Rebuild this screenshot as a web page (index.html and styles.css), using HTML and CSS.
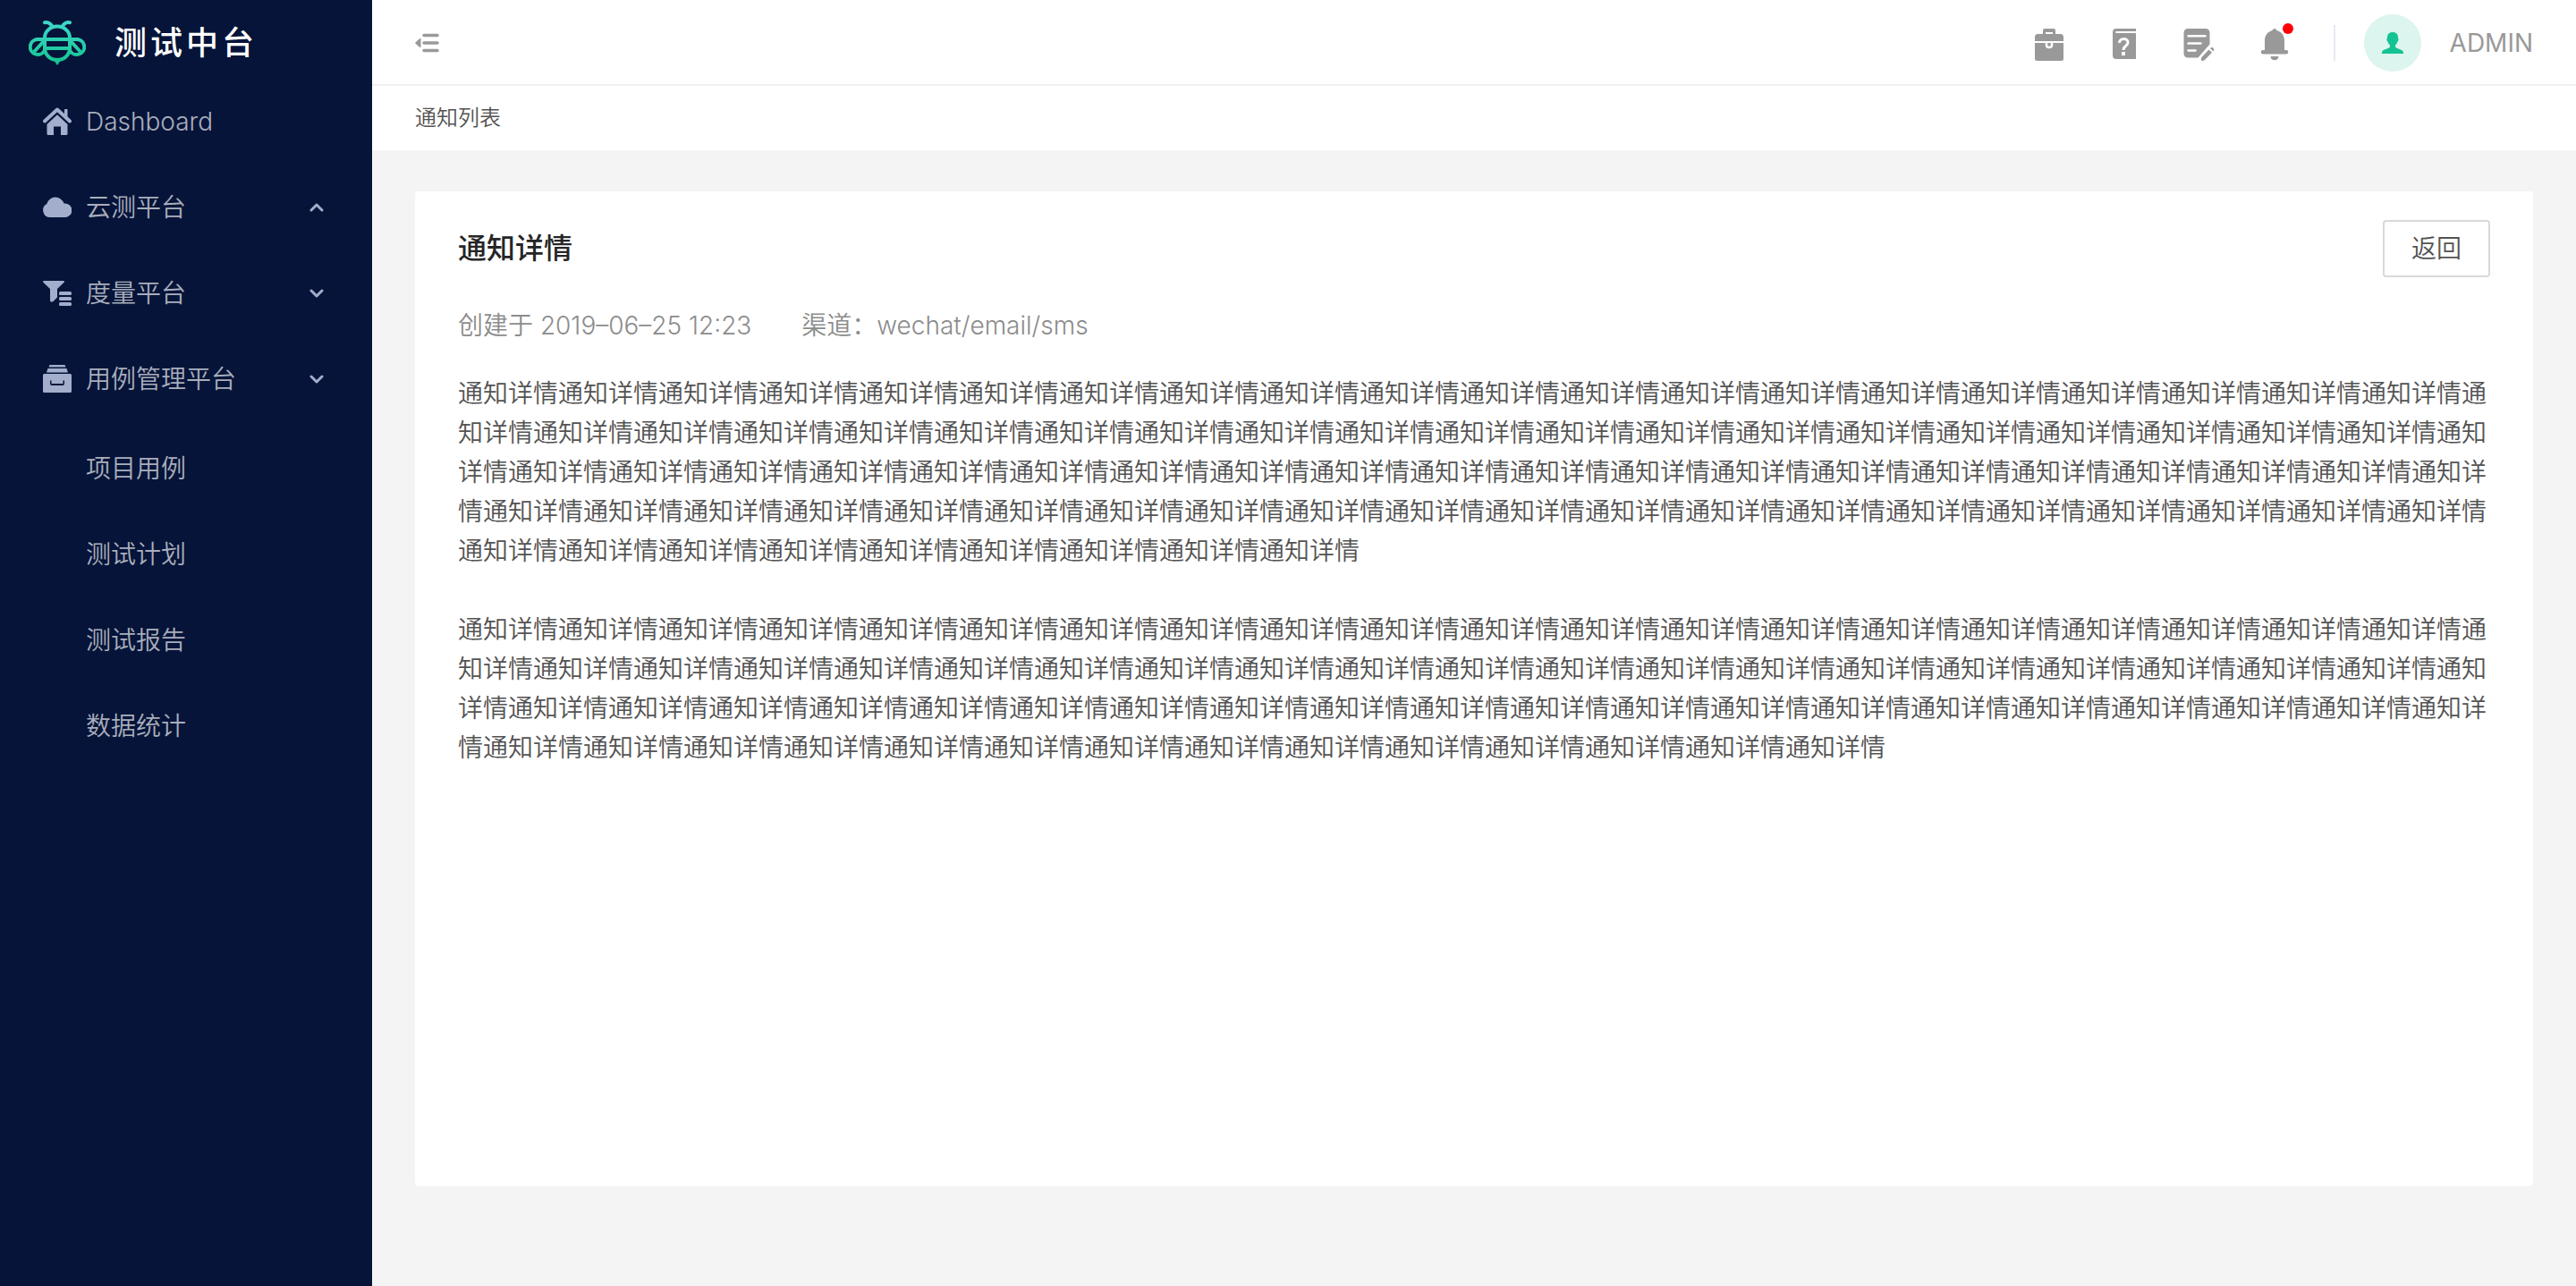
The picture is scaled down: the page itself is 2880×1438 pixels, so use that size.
FILE: index.html
```html
<!DOCTYPE html>
<html lang="zh-CN">
<head>
<meta charset="utf-8">
<meta name="viewport" content="width=device-width, initial-scale=1">
<title>通知详情 - 测试中台</title>
<link rel="stylesheet" href="styles.css">
</head>
<body>
<div class="app">
  <aside class="sidebar">
    <a class="brand" href="#">
      <svg class="brand-logo" viewBox="0 0 64 50" aria-hidden="true">
        <defs>
          <linearGradient id="bee" gradientUnits="userSpaceOnUse" x1="0" y1="0" x2="0" y2="50">
            <stop offset="0" stop-color="#3fd8cb"/>
            <stop offset="1" stop-color="#12c48f"/>
          </linearGradient>
        </defs>
        <g fill="none" stroke="url(#bee)" stroke-width="4">
          <path d="M18 2.200c5-.8 7 2 9 5M46 2.200c-5-.8-7 2-9 5" stroke-linecap="round"/>
          <path d="M18 21v-2a14 12.500 0 0 1 28 0v2M18 21v10a14 13 0 0 0 28 0V21"/>
          <path d="M10 21h44v.01H10zM18 31h28v.01H18z"/>
          <path d="M10 21a8.500 8.500 0 1 0 8 12M54 21a8.500 8.500 0 1 1-8 12"/>
          <path d="M6 35 17 23M58 35 47 23"/>
        </g>
        <path d="M28 44h8l-4 6z" fill="url(#bee)"/>
      </svg>
      <span class="brand-name">测试中台</span>
    </a>
    <nav class="menu">
      <a class="menu-item" href="#">
        <svg class="menu-icon" viewBox="0 0 32 32" aria-hidden="true">
          <path d="M2 15.500 16 2.500l14 13" fill="none" stroke="currentColor" stroke-width="4" stroke-linecap="round" stroke-linejoin="round"/>
          <path d="M24 9V2.800a.8.8 0 0 1 .8-.8h1.900a.8.8 0 0 1 .8.8V12z"/>
          <path d="M16 8.300 27.500 19v10.500a1.500 1.500 0 0 1-1.500 1.500h-6v-9.500h-8V31H6a1.500 1.500 0 0 1-1.500-1.500V19z"/>
        </svg>
        <span>Dashboard</span>
      </a>
      <a class="menu-item" href="#">
        <svg class="menu-icon" viewBox="0 0 32 32" aria-hidden="true">
          <path d="M8 27A8 8 0 0 1 4.300 12 10 10 0 0 1 23.500 11.500 7.800 7.800 0 1 1 24 27z"/>
        </svg>
        <span>云测平台</span>
        <svg class="menu-arrow" viewBox="0 0 16 16" aria-hidden="true"><path d="m2 11 6-6 6 6"/></svg>
      </a>
      <a class="menu-item" href="#">
        <svg class="menu-icon" viewBox="0 0 32 32" aria-hidden="true">
          <path d="M1 2h22c.9 0 1.300 1 .6 1.700L16 11v9.500L11.500 25c-.9 1-3.500.6-3.500-1V11L.4 3.700C-.3 3 .100 2 1 2z"/>
          <rect x="18" y="14" width="14" height="4" rx="1.500"/><rect x="18" y="20" width="14" height="4" rx="1.500"/><rect x="18" y="26" width="14" height="4" rx="1.500"/>
        </svg>
        <span>度量平台</span>
        <svg class="menu-arrow" viewBox="0 0 16 16" aria-hidden="true"><path d="m2 5 6 6 6-6"/></svg>
      </a>
      <a class="menu-item" href="#">
        <svg class="menu-icon" viewBox="0 0 32 32" aria-hidden="true">
          <path d="M6.500 2.500 7.500 0h17l1 2.500zM4 8.500 5.500 4h21L28 8.500z"/>
          <path fill-rule="evenodd" d="M1.500 10h29a1.500 1.500 0 0 1 1.500 1.500v18a1.500 1.500 0 0 1-1.500 1.500h-29A1.500 1.500 0 0 1 0 29.500v-18A1.500 1.500 0 0 1 1.500 10zM8 17.500V21q0 2 2 2h12q2 0 2-2v-3.500h-1.500V21H9.500v-3.500z"/>
        </svg>
        <span>用例管理平台</span>
        <svg class="menu-arrow" viewBox="0 0 16 16" aria-hidden="true"><path d="m2 5 6 6 6-6"/></svg>
      </a>
      <div class="submenu">
        <a class="submenu-item" href="#">项目用例</a>
        <a class="submenu-item" href="#">测试计划</a>
        <a class="submenu-item" href="#">测试报告</a>
        <a class="submenu-item" href="#">数据统计</a>
      </div>
    </nav>
  </aside>

  <div class="page">
    <header class="topbar">
      <button class="icon-button" type="button" aria-label="收起菜单">
        <svg class="fold-icon" viewBox="0 0 28 24" aria-hidden="true">
          <path d="M6.500 7.500v9q0 1-1 .5L.8 13q-1-1 0-2l4.700-4q1-.5 1 .5z"/>
          <path d="M10 3.500h15M10 12h15M10 20.500h15" stroke="currentColor" stroke-width="3.500" stroke-linecap="round"/>
        </svg>
      </button>
      <div class="tools">
        <button class="icon-button" type="button" aria-label="工具箱">
          <svg class="tool-icon" viewBox="0 0 36 36" aria-hidden="true">
            <path fill-rule="evenodd" d="M11 6V2a2 2 0 0 1 2-2h10a2 2 0 0 1 2 2v4h5.500A3.500 3.500 0 0 1 34 9.500V14H2V9.500A3.500 3.500 0 0 1 5.500 6zM14 4v2h8V4z"/>
            <path d="M2 16h32v17.500a2.500 2.500 0 0 1-2.500 2.500h-27A2.500 2.500 0 0 1 2 33.500z"/>
            <path d="M15 16v2.500a3 2.500 0 0 0 6 0V16" fill="none" stroke="#fff" stroke-width="2.500"/>
          </svg>
        </button>
        <button class="icon-button" type="button" aria-label="帮助">
          <svg class="tool-icon" viewBox="0 0 36 36" aria-hidden="true">
            <path fill-rule="evenodd" d="M9 0h22v3H10q-2 0-2 1t2 1h21v29H9a4 4 0 0 1-4-4V4a4 4 0 0 1 4-4zM15 26v4h4v-4z"/>
            <path d="M12.500 16c0-6 9.500-6 9.500-.5 0 4-5 3.500-5 8.500" fill="none" stroke="#fff" stroke-width="3"/>
          </svg>
        </button>
        <button class="icon-button" type="button" aria-label="编辑记录">
          <svg class="tool-icon" viewBox="0 0 36 36" aria-hidden="true">
            <path d="M5 0h20a4.500 4.500 0 0 1 4.500 4.500V17.500L16.500 32.500H5a4.500 4.500 0 0 1-4.500-4.500V4.500A4.500 4.500 0 0 1 5 0z"/>
            <path d="M5.500 8.200h19M5.500 16.500h14M5.500 24.500h8" stroke="#fff" stroke-width="2.500" stroke-linecap="round"/>
            <path d="m28.500 23.500 3.500 3.200-8 8.300q-1 1-4 1-.5-2.500.5-4zM30 22l1-.8q1.500-.6 2.600.6 1.200 1.200.4 2.700l-.8.8z"/>
          </svg>
        </button>
        <button class="icon-button notice" type="button" aria-label="通知">
          <svg class="tool-icon" viewBox="0 0 36 36" aria-hidden="true">
            <path d="M18 0q1.500 0 2.500 2C26 3.500 29 8 29 13v11h2a2.200 2.200 0 0 1 0 4.500H5A2.200 2.200 0 0 1 5 24h2V13C7 8 10 3.500 15.500 2 16.500 0 18 0 18 0z"/>
            <path d="M13.500 31h9q-.5 4.300-4.500 4.300T13.500 31z"/>
          </svg>
          <span class="badge"></span>
        </button>
        <div class="account">
          <span class="divider"></span>
          <a class="user" href="#">
            <span class="avatar">
              <svg class="avatar-icon" viewBox="0 0 24 24" aria-hidden="true">
                <path d="M12 0c4 0 6 2.300 6 6 0 1 .8 1.500.5 3-.2 1-.8 1.200-1 1.600-.4 1.700-1.300 2.700-2.500 3.900v2c1.500 2.500 9 2.500 9 6.200V24H0v-1.300c0-3.700 7.500-3.700 9-6.200v-2c-1.200-1.200-2.100-2.200-2.500-3.900-.2-.4-.8-.6-1-1.600C5.200 7.500 6 7 6 6c0-3.700 2-6 6-6z"/>
              </svg>
            </span>
            <span>ADMIN</span>
          </a>
        </div>
      </div>
    </header>
    <div class="breadcrumb">通知列表</div>
    <main class="content">
      <article class="card">
        <div class="card-head">
          <h1 class="card-title">通知详情</h1>
          <button class="back" type="button">返回</button>
        </div>
        <div class="meta">
          <span>创建于 2019–06–25 12:23</span>
          <span>渠道：wechat/email/sms</span>
        </div>
        <div class="detail">
          <p>通知详情通知详情通知详情通知详情通知详情通知详情通知详情通知详情通知详情通知详情通知详情通知详情通知详情通知详情通知详情通知详情通知详情通知详情通知详情通知详情通知详情通知详情通知详情通知详情通知详情通知详情通知详情通知详情通知详情通知详情通知详情通知详情通知详情通知详情通知详情通知详情通知详情通知详情通知详情通知详情通知详情通知详情通知详情通知详情通知详情通知详情通知详情通知详情通知详情通知详情通知详情通知详情通知详情通知详情通知详情通知详情通知详情通知详情通知详情通知详情通知详情通知详情通知详情通知详情通知详情通知详情通知详情通知详情通知详情通知详情通知详情通知详情通知详情通知详情通知详情通知详情通知详情通知详情通知详情通知详情通知详情通知详情通知详情通知详情通知详情通知详情通知详情通知详情通知详情通知详情</p>
          <p>通知详情通知详情通知详情通知详情通知详情通知详情通知详情通知详情通知详情通知详情通知详情通知详情通知详情通知详情通知详情通知详情通知详情通知详情通知详情通知详情通知详情通知详情通知详情通知详情通知详情通知详情通知详情通知详情通知详情通知详情通知详情通知详情通知详情通知详情通知详情通知详情通知详情通知详情通知详情通知详情通知详情通知详情通知详情通知详情通知详情通知详情通知详情通知详情通知详情通知详情通知详情通知详情通知详情通知详情通知详情通知详情通知详情通知详情通知详情通知详情通知详情通知详情通知详情通知详情通知详情通知详情通知详情通知详情通知详情通知详情通知详情通知详情通知详情通知详情通知详情</p>
        </div>
      </article>
    </main>
  </div>
</div>
</body>
</html>
```
FILE: styles.css
```css
* {
  box-sizing: border-box;
}

body {
  margin: 0;
  background: #f4f4f4;
  color: #535353;
  font: 350 28px/44px Inter, "Noto Sans CJK SC", sans-serif;
}

a {
  color: inherit;
  text-decoration: none;
}

svg {
  display: block;
  flex: none;
  fill: currentColor;
}

.app {
  display: flex;
  min-height: 100vh;
}

/* Sidebar */
.sidebar {
  flex: none;
  width: 416px;
  background: #061439;
  color: #a9aebc;
}

.brand {
  display: flex;
  align-items: center;
  gap: 32px;
  height: 96px;
  padding-left: 32px;
  color: #fff;
}

.brand-logo {
  width: 64px;
  height: 50px;
}

.brand-name {
  font-size: 36px;
  font-weight: 500;
  letter-spacing: 4px;
}

.menu-item {
  display: flex;
  align-items: center;
  gap: 16px;
  height: 80px;
  margin-bottom: 16px;
  padding: 0 54px 0 48px;
}

.menu-icon {
  width: 32px;
  height: 32px;
  color: #a2aecb;
}

.menu-arrow {
  width: 16px;
  height: 16px;
  margin-left: auto;
  fill: none;
  stroke: #a2aecb;
  stroke-width: 3;
  stroke-linecap: round;
  stroke-linejoin: round;
}

.submenu {
  padding-top: 4px;
}

.submenu-item {
  display: flex;
  align-items: center;
  height: 80px;
  margin-bottom: 16px;
  padding-left: 96px;
}

/* Top bar */
.page {
  display: flex;
  flex: 1;
  flex-direction: column;
  min-width: 0;
}

.topbar {
  display: flex;
  align-items: center;
  justify-content: space-between;
  height: 96px;
  padding: 2px 48px 0;
  border-bottom: 2px solid #f0f0f0;
  background: #fff;
  color: #999;
}

.icon-button {
  padding: 0;
  border: 0;
  background: none;
  color: inherit;
}

.fold-icon {
  width: 28px;
  height: 24px;
}

.tools {
  display: flex;
  align-items: center;
  gap: 48px;
}

.tool-icon {
  width: 36px;
  height: 36px;
  margin-top: 4px;
}

.notice {
  position: relative;
}

.badge {
  position: absolute;
  top: -2px;
  right: -3px;
  width: 12px;
  height: 12px;
  border-radius: 50%;
  background: #f00;
}

.account {
  display: flex;
  align-items: center;
  gap: 32px;
}

.divider {
  width: 2px;
  height: 40px;
  background: #e6eaf2;
}

.user {
  display: flex;
  align-items: center;
  gap: 32px;
  font-weight: 400;
}

.avatar {
  display: grid;
  place-items: center;
  width: 64px;
  height: 64px;
  border-radius: 50%;
  background: #dcf5ee;
  color: #14c393;
}

.avatar-icon {
  width: 24px;
  height: 24px;
}

.breadcrumb {
  padding: 14px 48px;
  background: #fff;
  font-size: 24px;
}

/* Detail card */
.content {
  padding: 46px 48px;
}

.card {
  min-height: 1112px;
  padding: 32px 48px;
  border-radius: 4px;
  background: #fff;
}

.card-head {
  display: flex;
  align-items: center;
  justify-content: space-between;
}

.card-title {
  margin: 0;
  color: #262626;
  font-size: 32px;
  font-weight: 500;
}

.back {
  height: 64px;
  padding: 0 30px;
  border: 2px solid #d9d9d9;
  border-radius: 4px;
  background: #fff;
  color: inherit;
  font: inherit;
}

.meta {
  display: flex;
  gap: 56px;
  margin-top: 32px;
  color: #8c8c8c;
}

.detail {
  margin-top: 32px;
}

.detail p {
  margin: 0 0 44px;
}
```
